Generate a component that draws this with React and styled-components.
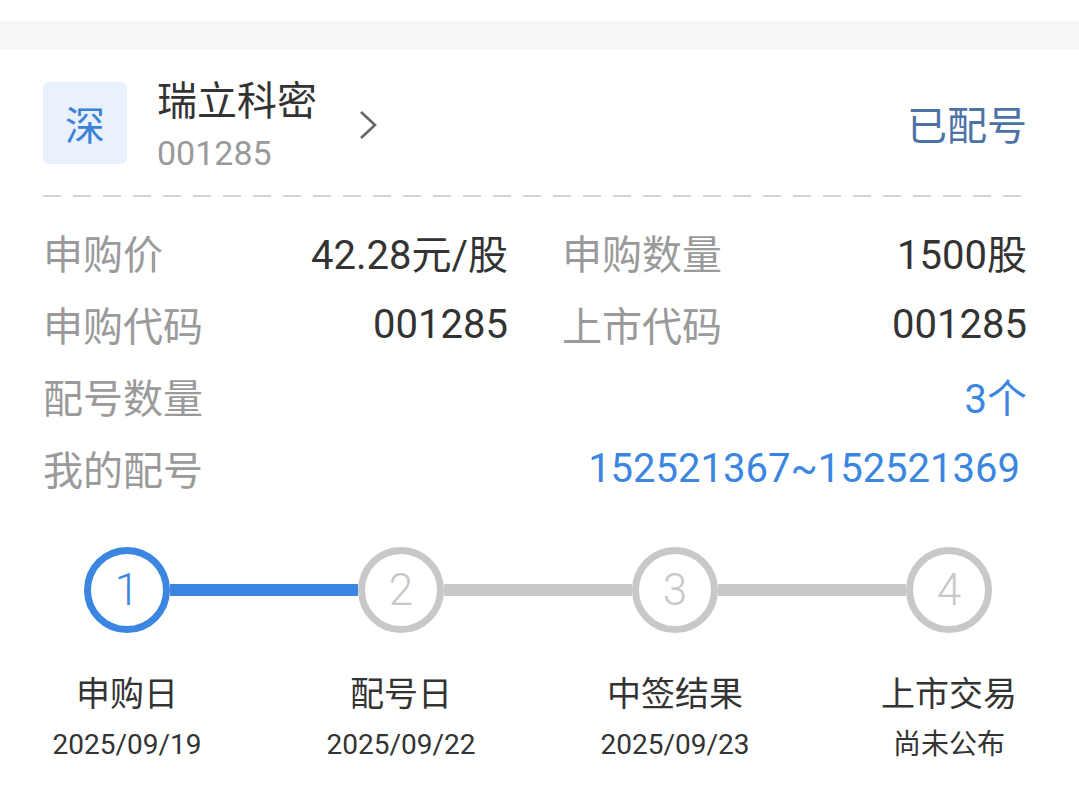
import React from "react";
import styled, { createGlobalStyle } from "styled-components";

const GlobalStyle = createGlobalStyle`
  body {
    margin: 0;
    background: #ffffff;
    font-family: Roboto, "Noto Sans CJK SC", sans-serif;
  }
`;

const Page = styled.div`
  width: 1079px;
  padding-top: 21px;
  background: #ffffff;
`;

const Band = styled.div`
  height: 29px;
  background: #f5f6f8;
`;

const Header = styled.div`
  display: flex;
  align-items: flex-start;
  margin-top: 28px;
  padding: 0 52px 0 43px;
`;

const Badge = styled.div`
  width: 84px;
  height: 82px;
  margin-top: 4px;
  border-radius: 6px;
  background: #e8f1fc;
  color: #3b82d9;
  font-size: 40px;
  display: flex;
  align-items: center;
  justify-content: center;
`;

const NameBlock = styled.div`
  margin-left: 30px;
  display: flex;
  flex-direction: column;
`;

const Name = styled.div`
  font-size: 40px;
  line-height: 48px;
  color: #333333;
`;

const Code = styled.div`
  font-size: 34px;
  line-height: 46px;
  margin-top: 4px;
  color: #9a9a9a;
`;

const Chevron = styled.svg`
  margin-left: 41px;
  margin-top: 32px;
  width: 20px;
  height: 30px;
`;

const Status = styled.div`
  margin-left: auto;
  margin-top: 25px;
  font-size: 40px;
  line-height: 48px;
  color: #4d72a6;
`;

const Dash = styled.div`
  margin: 19px 52px 0 43px;
  height: 2px;
  background: repeating-linear-gradient(
    to right,
    #d4d4d4 0,
    #d4d4d4 18px,
    transparent 18px,
    transparent 30px
  );
`;

const InfoGrid = styled.div`
  display: grid;
  grid-template-columns: 465px 465px;
  column-gap: 54px;
  grid-auto-rows: 72px;
  padding: 19px 52px 0 43px;
`;

const InfoRow = styled.div`
  display: flex;
  align-items: center;
  justify-content: space-between;
  grid-column: ${(p) => (p.$wide ? "1 / -1" : "auto")};
`;

const Label = styled.span`
  font-size: 40px;
  color: #9a9a9a;
`;

const Value = styled.span`
  font-size: 40px;
  color: ${(p) => (p.$link ? "#3a86e0" : "#333333")};
  margin-right: ${(p) => (p.$inset ? "7px" : "0")};
`;

const Track = styled.div`
  display: flex;
  align-items: center;
  margin-top: 43px;
  padding: 0 87px 0 84px;
`;

const Circle = styled.div`
  width: 86px;
  height: 86px;
  box-sizing: border-box;
  border-radius: 50%;
  border: 7px solid ${(p) => (p.$active ? "#3a86e0" : "#c8c8c8")};
  color: ${(p) => (p.$active ? "#3a86e0" : "#c8c8c8")};
  font-size: 44px;
  font-weight: 300;
  display: flex;
  align-items: center;
  justify-content: center;
  flex-shrink: 0;
`;

const Line = styled.div`
  flex: 1;
  height: 12px;
  background: ${(p) => (p.$active ? "#3a86e0" : "#c8c8c8")};
`;

const Labels = styled.div`
  display: flex;
  justify-content: space-between;
  margin-top: 41px;
  padding: 0 30px 0 27px;
`;

const StepText = styled.div`
  width: 200px;
  display: flex;
  flex-direction: column;
  align-items: center;
  color: #333333;
`;

const StepTitle = styled.div`
  font-size: 34px;
  line-height: 40px;
`;

const StepDate = styled.div`
  font-size: 28px;
  line-height: 36px;
  margin-top: 13px;
`;

const steps = [
  { n: 1, title: "申购日", date: "2025/09/19" },
  { n: 2, title: "配号日", date: "2025/09/22" },
  { n: 3, title: "中签结果", date: "2025/09/23" },
  { n: 4, title: "上市交易", date: "尚未公布" },
];

export default function App() {
  const current = 1;
  return (
    <Page>
      <GlobalStyle />
      <Band />
      <Header>
        <Badge>深</Badge>
        <NameBlock>
          <Name>瑞立科密</Name>
          <Code>001285</Code>
        </NameBlock>
        <Chevron viewBox="0 0 20 30">
          <path d="M3 2 L17 15 L3 28" fill="none" stroke="#666" strokeWidth="2.6" />
        </Chevron>
        <Status>已配号</Status>
      </Header>
      <Dash />
      <InfoGrid>
        <InfoRow>
          <Label>申购价</Label>
          <Value>42.28元/股</Value>
        </InfoRow>
        <InfoRow>
          <Label>申购数量</Label>
          <Value>1500股</Value>
        </InfoRow>
        <InfoRow>
          <Label>申购代码</Label>
          <Value>001285</Value>
        </InfoRow>
        <InfoRow>
          <Label>上市代码</Label>
          <Value>001285</Value>
        </InfoRow>
        <InfoRow $wide>
          <Label>配号数量</Label>
          <Value $link>3个</Value>
        </InfoRow>
        <InfoRow $wide>
          <Label>我的配号</Label>
          <Value $link $inset>152521367~152521369</Value>
        </InfoRow>
      </InfoGrid>
      <Track>
        {steps.map((s, i) => (
          <React.Fragment key={s.n}>
            {i > 0 && <Line $active={i <= current} />}
            <Circle $active={s.n === current}>{s.n}</Circle>
          </React.Fragment>
        ))}
      </Track>
      <Labels>
        {steps.map((s) => (
          <StepText key={s.n}>
            <StepTitle>{s.title}</StepTitle>
            <StepDate>{s.date}</StepDate>
          </StepText>
        ))}
      </Labels>
    </Page>
  );
}
